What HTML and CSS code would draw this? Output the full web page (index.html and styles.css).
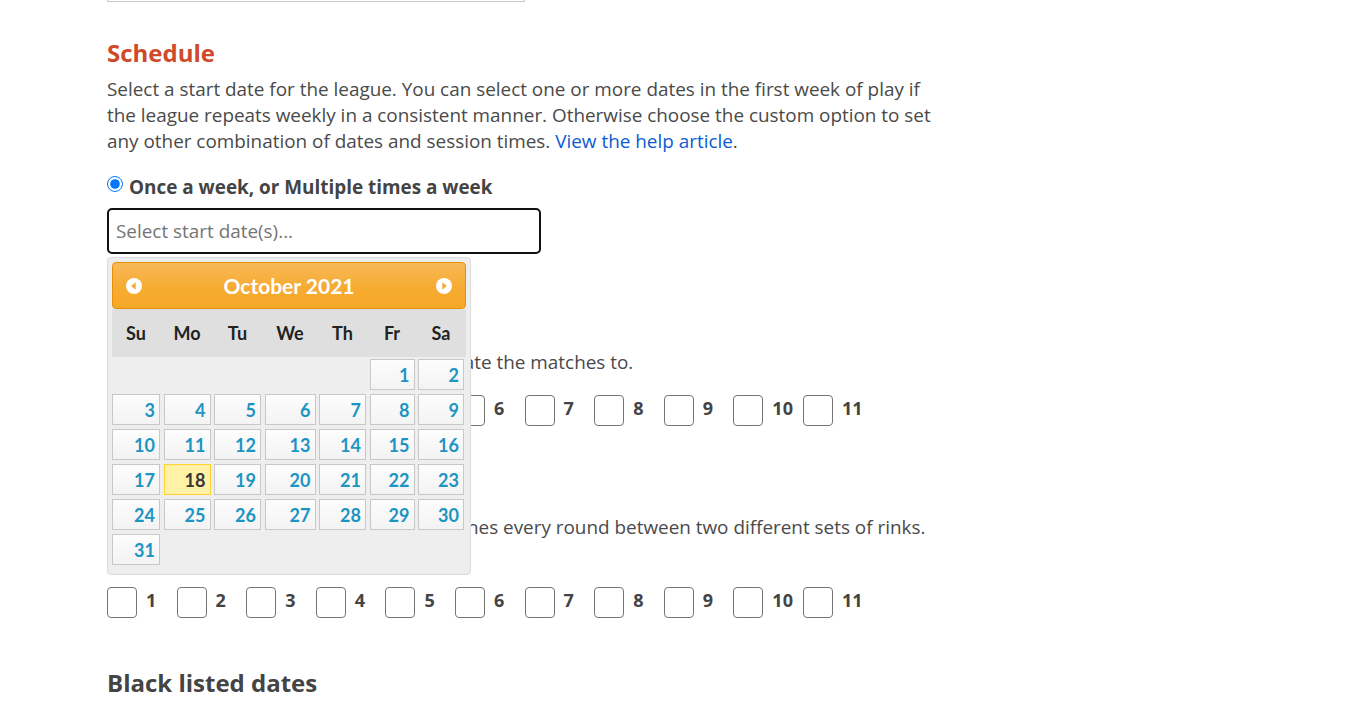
FILE: index.html
```html
<!DOCTYPE html>
<html lang="en">
<head>
<meta charset="utf-8">
<title>League schedule</title>
<link rel="stylesheet" href="styles.css">
</head>
<body>
<div class="page">
  <div class="prev-field"></div>
  <h2 class="section-title">Schedule</h2>
  <p class="desc intro">Select a start date for the league. You can select one or more dates in the first week of play if the league repeats weekly in a consistent manner. Otherwise choose the custom option to set any other combination of dates and session times. <a href="#" class="help-link">View the help article</a>.</p>
  <label class="radio-row"><input type="radio" name="mode" class="radio" checked><span>Once a week, or Multiple times a week</span></label>
  <div class="date-field">
    <input class="date-input" type="text" placeholder="Select start date(s)...">
    <div class="datepicker">
      <div class="dp-header">
        <span class="dp-nav"><svg width="16" height="16" viewBox="0 0 16 16"><circle cx="8" cy="8" r="8" fill="#fff"/><polygon points="9.6,4.3 5.2,8 9.6,11.7" fill="#f6a828"/></svg></span>
        <span class="dp-title">October 2021</span>
        <span class="dp-nav"><svg width="16" height="16" viewBox="0 0 16 16"><circle cx="8" cy="8" r="8" fill="#fff"/><polygon points="6.4,4.3 10.8,8 6.4,11.7" fill="#f6a828"/></svg></span>
      </div>
      <div class="dp-days">
        <span>Su</span><span>Mo</span><span>Tu</span><span>We</span><span>Th</span><span>Fr</span><span>Sa</span>
      </div>
      <div class="dp-grid">
        <span></span><span></span><span></span><span></span><span></span>
        <a class="day">1</a><a class="day">2</a>
        <a class="day">3</a><a class="day">4</a><a class="day">5</a><a class="day">6</a><a class="day">7</a><a class="day">8</a><a class="day">9</a>
        <a class="day">10</a><a class="day">11</a><a class="day">12</a><a class="day">13</a><a class="day">14</a><a class="day">15</a><a class="day">16</a>
        <a class="day">17</a><a class="day today">18</a><a class="day">19</a><a class="day">20</a><a class="day">21</a><a class="day">22</a><a class="day">23</a>
        <a class="day">24</a><a class="day">25</a><a class="day">26</a><a class="day">27</a><a class="day">28</a><a class="day">29</a><a class="day">30</a>
        <a class="day">31</a>
      </div>
    </div>
  </div>
  <label class="radio-row custom"><input type="radio" name="mode" class="radio"><span>Custom</span></label>
  <h3 class="sub-title">Rinks</h3>
  <p class="desc">Pick the rinks that you would like to allocate the matches to.</p>
  <div class="check-row">
    <label class="check"><input type="checkbox" class="box"><span>1</span></label>
    <label class="check"><input type="checkbox" class="box"><span>2</span></label>
    <label class="check"><input type="checkbox" class="box"><span>3</span></label>
    <label class="check"><input type="checkbox" class="box"><span>4</span></label>
    <label class="check"><input type="checkbox" class="box"><span>5</span></label>
    <label class="check"><input type="checkbox" class="box"><span>6</span></label>
    <label class="check"><input type="checkbox" class="box"><span>7</span></label>
    <label class="check"><input type="checkbox" class="box"><span>8</span></label>
    <label class="check"><input type="checkbox" class="box"><span>9</span></label>
    <label class="check"><input type="checkbox" class="box"><span>10</span></label>
    <label class="check"><input type="checkbox" class="box"><span>11</span></label>
  </div>
  <h3 class="sub-title alt">Alternate rinks</h3>
  <p class="desc">Pick the other rinks to alternate the matches every round between two different sets of rinks.</p>
  <div class="check-row second">
    <label class="check"><input type="checkbox" class="box"><span>1</span></label>
    <label class="check"><input type="checkbox" class="box"><span>2</span></label>
    <label class="check"><input type="checkbox" class="box"><span>3</span></label>
    <label class="check"><input type="checkbox" class="box"><span>4</span></label>
    <label class="check"><input type="checkbox" class="box"><span>5</span></label>
    <label class="check"><input type="checkbox" class="box"><span>6</span></label>
    <label class="check"><input type="checkbox" class="box"><span>7</span></label>
    <label class="check"><input type="checkbox" class="box"><span>8</span></label>
    <label class="check"><input type="checkbox" class="box"><span>9</span></label>
    <label class="check"><input type="checkbox" class="box"><span>10</span></label>
    <label class="check"><input type="checkbox" class="box"><span>11</span></label>
  </div>
  <h2 class="section-title dark">Black listed dates</h2>
</div>
</body>
</html>
```
FILE: styles.css
```css
* { box-sizing: border-box; }

html, body {
  margin: 0;
  padding: 0;
  background: #fff;
}

body {
  font-family: "Open Sans", "Liberation Sans", sans-serif;
  color: #4a4a4a;
  font-size: 18.9px;
  line-height: 26px;
}

.page {
  padding-left: 107px;
  width: 942px;
}

.prev-field {
  width: 418px;
  height: 2px;
  border: 1px solid #c8c8c8;
  border-top: none;
}

.section-title {
  margin: 35px 0 0;
  font-size: 24px;
  line-height: 32px;
  font-weight: 700;
  color: #cf4a2a;
}

.section-title.dark {
  margin-top: 50px;
  color: #444;
}

.desc {
  margin: 6px 0 0;
}

.desc.intro {
  margin-top: 7px;
}

.help-link {
  color: #0d5bd1;
  text-decoration: none;
}

.radio-row {
  display: flex;
  align-items: flex-start;
  gap: 6px;
  margin-top: 20px;
  font-weight: 700;
  color: #444;
}

.radio-row.custom {
  margin-top: 17px;
}

.radio {
  width: 16px;
  height: 16px;
  margin: 2px 0 0;
}

.date-field {
  position: relative;
  margin-top: 8px;
  width: 434px;
}

.date-input {
  display: block;
  width: 434px;
  height: 46px;
  border: 2px solid #111;
  border-radius: 5px;
  padding: 0 7px;
  font-family: "Open Sans", "Liberation Sans", sans-serif;
  font-size: 18.9px;
  color: #333;
  outline: none;
  background: #fff;
}

.date-input::placeholder {
  color: #757575;
}

.sub-title {
  margin: 18px 0 0;
  font-size: 20px;
  line-height: 28px;
  font-weight: 700;
  color: #444;
}

.sub-title.alt {
  margin-top: 55px;
}

.check-row {
  display: grid;
  grid-template-columns: repeat(11, 69.6px);
  margin-top: 20px;
}

.check-row.second {
  margin-top: 47px;
}

.check {
  display: flex;
  align-items: center;
  gap: 9px;
  height: 30px;
  font-size: 18px;
  font-weight: 700;
  color: #444;
}

.check span {
  margin-top: -4px;
}

.box {
  appearance: none;
  -webkit-appearance: none;
  width: 30px;
  height: 31px;
  margin: 0;
  border: 1.5px solid #767676;
  border-radius: 4px;
  background: #fff;
  flex: none;
}

/* datepicker */
.datepicker {
  position: absolute;
  top: calc(100% + 3px);
  left: 0;
  width: 364px;
  padding: 4px 4px 9px;
  background: #eee;
  border: 1px solid #dcdcdc;
  border-radius: 4px;
  font-family: Lato, "DejaVu Sans", sans-serif;
  z-index: 10;
}

.dp-header {
  display: flex;
  align-items: center;
  justify-content: space-between;
  height: 47px;
  padding: 0 13px;
  border: 1px solid #e78f08;
  border-radius: 4px;
  background: linear-gradient(#f8b957, #f6ab32 55%, #f6a828);
  color: #fff;
}

.dp-nav {
  display: flex;
  width: 16px;
  height: 16px;
}

.dp-title {
  font-size: 21px;
  font-weight: 700;
  line-height: 1;
}

.dp-days,
.dp-grid {
  display: grid;
  grid-template-columns: 48px 47px 47px 51px 47px 45px 46px;
  column-gap: 3.5px;
}

.dp-days {
  height: 48px;
  align-items: center;
  background: #dfdfdf;
  font-size: 18px;
  font-weight: 700;
  color: #222;
  text-align: center;
}

.dp-grid {
  margin-top: 2px;
  row-gap: 4px;
  grid-auto-rows: 31px;
}

.day {
  display: flex;
  align-items: center;
  justify-content: flex-end;
  padding-right: 4px;
  border: 1px solid #c8c8c8;
  background: linear-gradient(#fdfdfd, #f3f3f3);
  color: #1c94c4;
  font-size: 18px;
  font-weight: 700;
}

.day.today {
  border-color: #fed22f;
  background: #fff1a6;
  color: #363636;
}
```
